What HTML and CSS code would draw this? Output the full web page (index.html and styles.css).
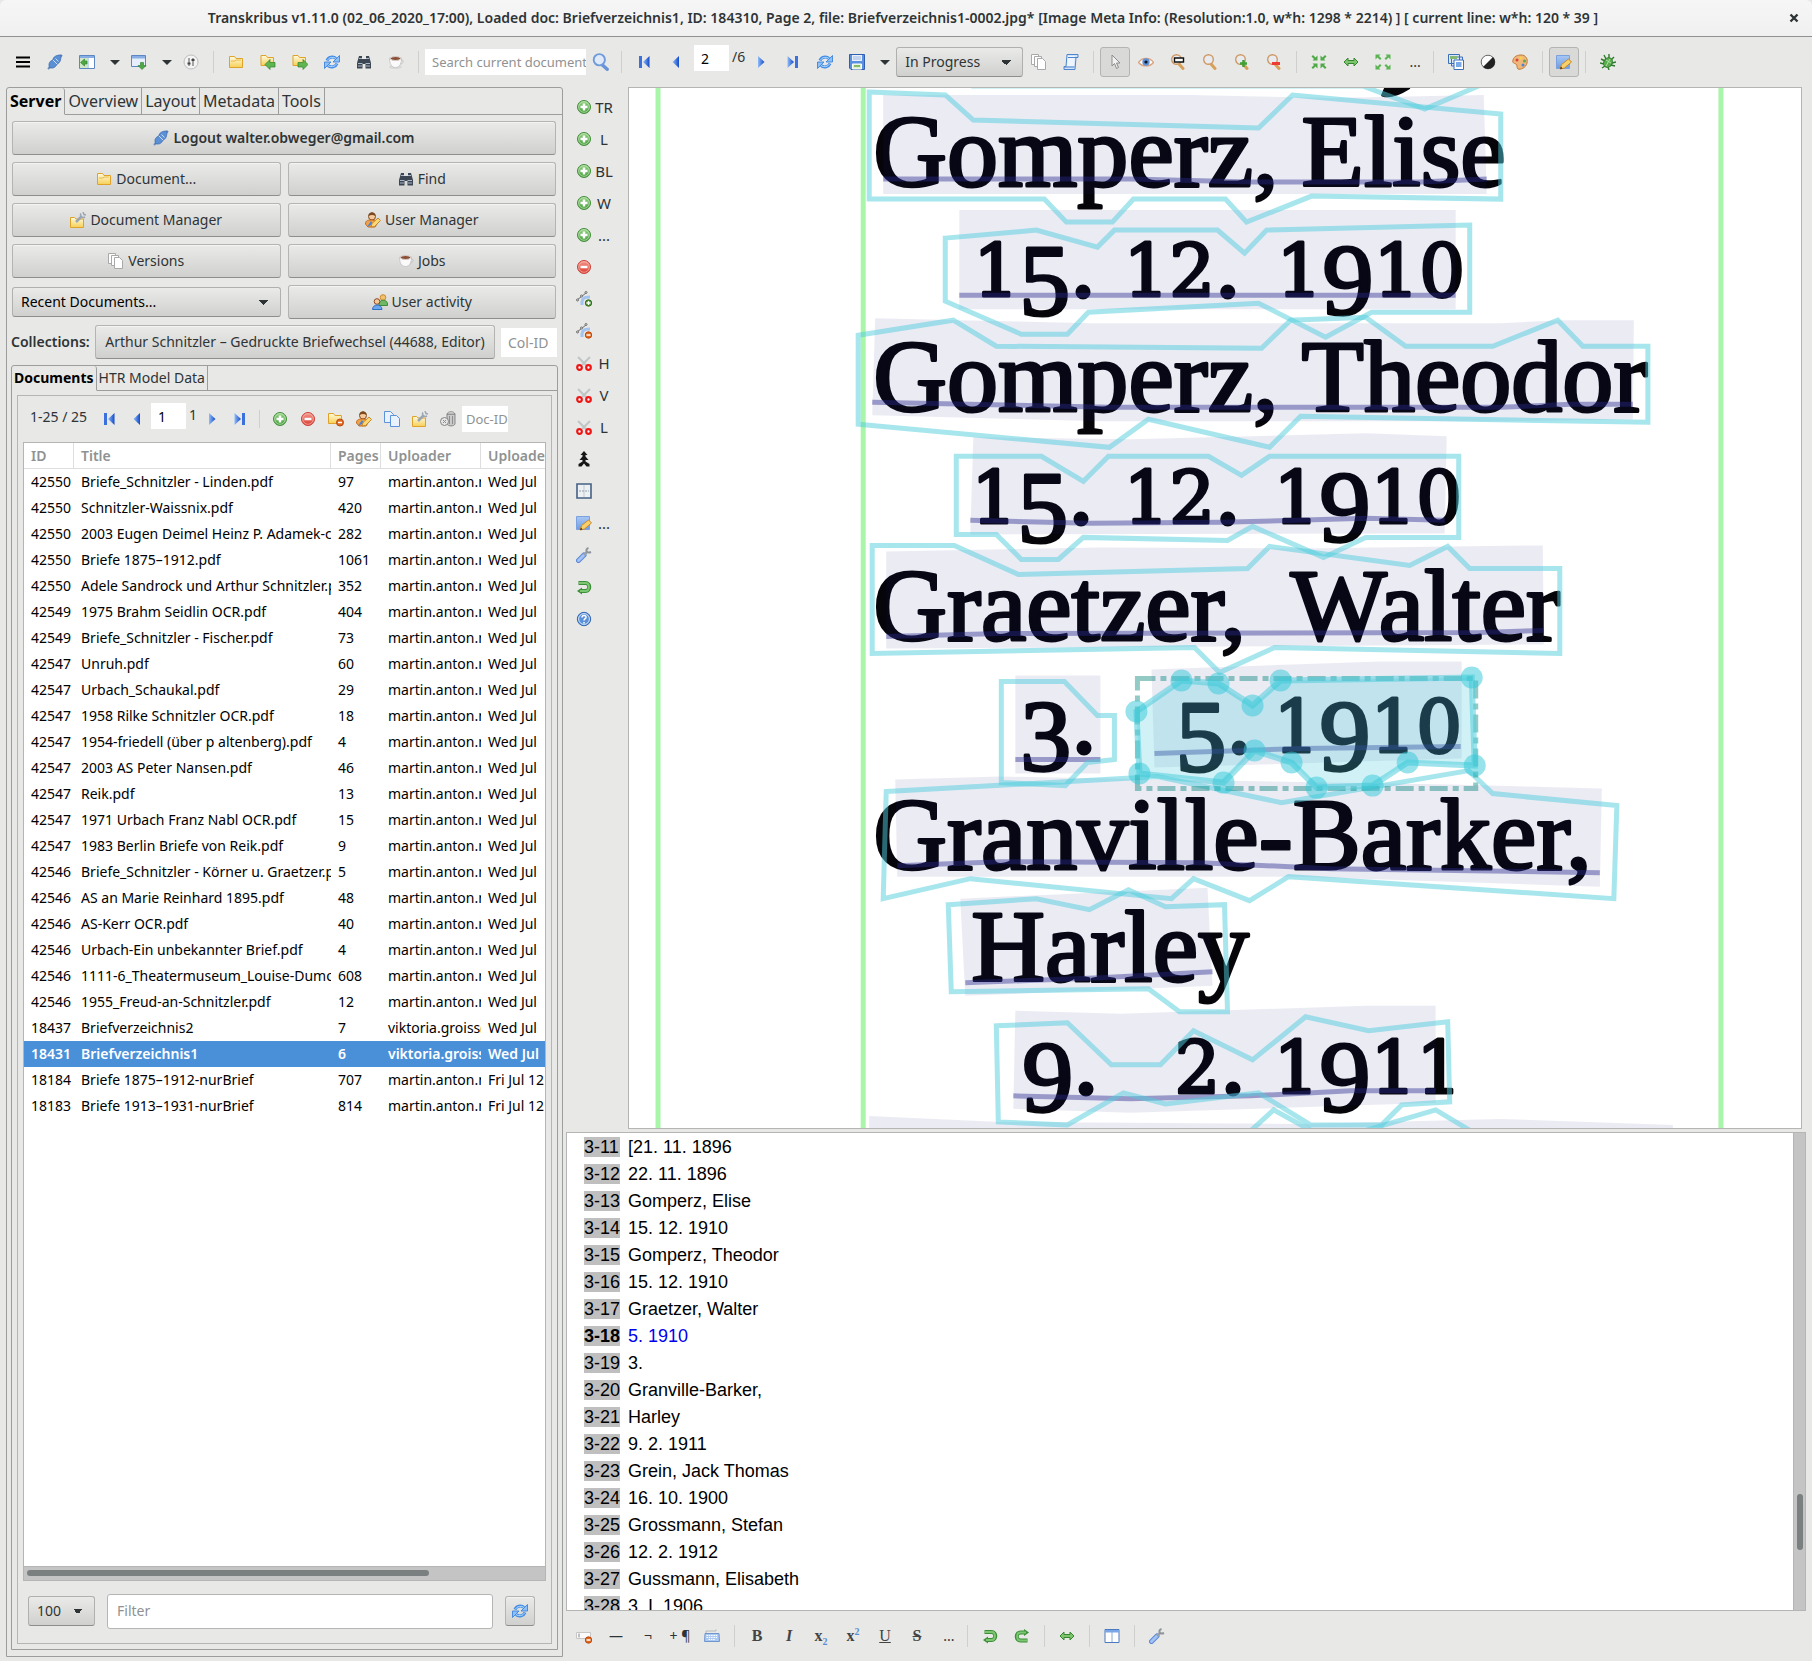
FILE: index.html
```html
<!DOCTYPE html>
<html lang="en">
<head>
<meta charset="utf-8">
<title>Transkribus v1.11.0</title>
<link rel="stylesheet" href="styles.css">
</head>
<body>
<svg class="sprite" aria-hidden="true">
  <defs>
    <linearGradient id="g-green" x2="0" y2="1"><stop offset="0" stop-color="#9bd58c"/><stop offset="1" stop-color="#3f9a36"/></linearGradient>
    <linearGradient id="g-red" x2="0" y2="1"><stop offset="0" stop-color="#f49a8c"/><stop offset="1" stop-color="#d93a30"/></linearGradient>
    <linearGradient id="g-fold" x2="0" y2="1"><stop offset="0" stop-color="#fffbe0"/><stop offset="1" stop-color="#f6cf55"/></linearGradient>
    <linearGradient id="g-blue" x2="1" y2="0"><stop offset="0" stop-color="#8fbcf8"/><stop offset="1" stop-color="#1148c8"/></linearGradient>
    <linearGradient id="g-sky" x2="0" y2="1"><stop offset="0" stop-color="#a8c8f4"/><stop offset="1" stop-color="#6d9ce4"/></linearGradient>
  </defs>
  <symbol id="menu" viewBox="0 0 16 16"><path d="M1 3.5h14M1 8h14M1 12.500h14" stroke="#000" stroke-width="2.200"/></symbol>
  <symbol id="plug" viewBox="0 0 16 16"><path d="M1 15l3-3M12 4l3-3" stroke="#6d8dbd" stroke-width="2"/><path d="M2.500 13.500C1 9 3 7 6 6c0-3 3-5 8-5 0 5-1 8-4 9-1 3-4 5-7.500 3.500z" fill="#5b8fd6" stroke="#3d6cae" stroke-width=".8"/><path d="M6 6l4 4M8.500 4.500l3 3" stroke="#c9ddf6"/></symbol>
  <symbol id="panel-in" viewBox="0 0 16 16"><path d="M.5 1.500h15v13H.5z" fill="#fff" stroke="#5c86c4"/><path d="M1 2h14v2H1z" fill="#88aee6"/><path d="M1 4h7v10H1z" fill="#cfe6c8"/><path d="M9 4v10" stroke="#88aee6"/><path d="M1.500 8.500L5.500 5v2H8v3H5.500v2z" fill="#4ea843" stroke="#2c7d27" stroke-width=".6"/></symbol>
  <symbol id="panel-down" viewBox="0 0 16 16"><path d="M.5 1.500h14v11H.5z" fill="#e6effb" stroke="#5c86c4"/><path d="M1 2h13v2.500H1z" fill="#88aee6"/><path d="M9.500 8.500h3v3h2.500L11 15.500 7 11.500h2.500z" fill="#4ea843" stroke="#2c7d27" stroke-width=".6"/></symbol>
  <symbol id="sliders" viewBox="0 0 16 16"><circle cx="8" cy="8" r="7" fill="#f4f4f4" stroke="#bdbdbd"/><path d="M6 4v8M10 4v8" stroke="#555"/><path d="M4.500 9.500h3M8.500 6h3" stroke="#444" stroke-width="2"/></symbol>
  <symbol id="folder" viewBox="0 0 16 16"><path d="M1.500 13.500v-11h5l1.500 2h6.500v9z" fill="url(#g-fold)" stroke="#dfa22b"/><path d="M3 7h4l1-1h5" fill="none" stroke="#e9b84a"/></symbol>
  <symbol id="folder-in" viewBox="0 0 16 16"><path d="M1 11.500v-10h5l1.500 2h6v8z" fill="url(#g-fold)" stroke="#dfa22b"/><path d="M5 10.500l5-5v3h5v4.500h-5v2.500z" fill="#5fb650" stroke="#2f7f2a" stroke-width=".7"/></symbol>
  <symbol id="folder-out" viewBox="0 0 16 16"><path d="M1 11.500v-10h5l1.500 2h6v8z" fill="url(#g-fold)" stroke="#dfa22b"/><path d="M16 10.500l-5-5v3H6v4.500h5v2.500z" fill="#5fb650" stroke="#2f7f2a" stroke-width=".7"/></symbol>
  <symbol id="refresh" viewBox="0 0 16 16"><path d="M3 6.500A5.500 5 0 0 1 12 4.500M13 9.500A5.500 5 0 0 1 4 11.500" fill="none" stroke="#3f8be6" stroke-width="3"/><path d="M3.500 6A5.500 5 0 0 1 12 4.500M12.500 10A5.500 5 0 0 1 4 11.500" fill="none" stroke="#b8dbff" stroke-width="1"/><path d="M15.500 1.500v6.500H9zM.5 14.500V8H7z" fill="#8cc0fb" stroke="#2f7ad8" stroke-width=".8"/></symbol>
  <symbol id="binoculars" viewBox="0 0 16 16"><path d="M3 2h3v3h4V2h3l2 7v5.500H9.500V10h-3v4.500H1V9z" fill="#3c4652"/><path d="M3 4.500h3M10 4.500h3M2 9.500h4.500M9.500 9.500H14M2 12h4M10 12h4" stroke="#a9b8c8"/></symbol>
  <symbol id="cup" viewBox="0 0 16 16"><ellipse cx="7.500" cy="13" rx="6.500" ry="2" fill="#d8d8d8"/><path d="M1.500 4h12c0 6-2 9.500-6 9.500S1.500 10 1.500 4z" fill="#fafafa" stroke="#c3c3c3" stroke-width=".8"/><path d="M13 6c3-1 3 4-1 4" fill="none" stroke="#c3c3c3"/><ellipse cx="7.500" cy="4.500" rx="5" ry="2" fill="#8b4f35" stroke="#d8d0cc"/></symbol>
  <symbol id="search" viewBox="0 0 16 16"><path d="M9 10.500l4.500 4" stroke="#6794d6" stroke-width="3" stroke-linecap="round"/><circle cx="6.500" cy="6" r="5" fill="#dfe9f7" stroke="#6f9bdc" stroke-width="1.700"/></symbol>
  <symbol id="first" viewBox="0 0 16 16"><path d="M3 2h3v12H3z" fill="#3c70dc"/><path d="M13.500 2v12L7 8z" fill="url(#g-blue)"/></symbol>
  <symbol id="prev" viewBox="0 0 16 16"><path d="M11 2v12L4.500 8z" fill="url(#g-blue)"/></symbol>
  <symbol id="next" viewBox="0 0 16 16"><path d="M5 2v12l6.500-6z" fill="url(#g-blue)"/></symbol>
  <symbol id="last" viewBox="0 0 16 16"><path d="M10 2h3v12h-3z" fill="#3c70dc"/><path d="M2.500 2v12L9 8z" fill="url(#g-blue)"/></symbol>
  <symbol id="save" viewBox="0 0 16 16"><path d="M.5.5h15v15H2l-1.500-1.500z" fill="#5b8fe0" stroke="#2f5fae"/><path d="M3 1h10v6H3z" fill="#e8f0fc"/><path d="M4 3h8M4 5h8" stroke="#9ab6e0"/><path d="M3.500 10h9v5h-9z" fill="#d9f0c8" stroke="#fff"/><path d="M5 12h6" stroke="#69a94e" stroke-width="1.500"/></symbol>
  <symbol id="pages" viewBox="0 0 16 16"><g fill="#fff" stroke="#a9a9a9"><path d="M.5.5h7v10h-7z"/><path d="M3.500 2.500h7v10h-7z"/><path d="M6.500 4.500h5l3 3v8h-8z"/></g></symbol>
  <symbol id="scroll" viewBox="0 0 16 16"><path d="M4 .5h11v3h-2L12 15.500H1v-3h2z" fill="#cfe3fb" stroke="#4f84cc"/><path d="M5 2l-1 10h7l1-10z" fill="#edf5ff"/><path d="M1 13h10.500M5 3.500h8" stroke="#4f84cc"/></symbol>
  <symbol id="pointer" viewBox="0 0 16 16"><path d="M5 1v11l2.500-2.500 2 5 2-1-2-4.500h3.500z" fill="#f2f2f2" stroke="#8c8c8c"/></symbol>
  <symbol id="eye" viewBox="0 0 16 16"><path d="M.5 8.500C4 3 12 3 15.500 8.500 12 13 4 13 .5 8.500z" fill="#fff" stroke="#dca27c" stroke-width="1.300"/><circle cx="8" cy="8" r="3.700" fill="#5d93d6"/><circle cx="8" cy="8" r="1.600" fill="#112"/></symbol>
  <symbol id="mag" viewBox="0 0 16 16"><path d="M9 10l4 4.500" stroke="#d8a15a" stroke-width="3" stroke-linecap="round"/><circle cx="6.500" cy="5.500" r="4.800" fill="#e8ebf0" stroke="#cf9a66" stroke-width="1.400"/></symbol>
  <symbol id="mag-rect" viewBox="0 0 16 16"><use href="#mag"/><path d="M4.500 4h9v4h-9z" fill="#fff" stroke="#111" stroke-width="1.400"/></symbol>
  <symbol id="zoom-in" viewBox="0 0 16 16"><use href="#mag"/><path d="M9.500 6v7M6 9.500h7" stroke="#3f9f38" stroke-width="2.500"/></symbol>
  <symbol id="zoom-out" viewBox="0 0 16 16"><use href="#mag"/><path d="M6 9.500h8" stroke="#ee3b33" stroke-width="3"/></symbol>
  <symbol id="fit-in" viewBox="0 0 16 16"><g fill="#4fa947"><path d="M6.500 6.500H1.500L3 5 .5 2.500 2 1l2.500 2.500 2-2z"/><path d="M9.500 6.500h5L13 5l2.500-2.500L14 1l-2.500 2.500-2-2z"/><path d="M6.500 9.500h-5L3 11 .5 13.500 2 15l2.500-2.500 2 2z"/><path d="M9.500 9.500h5L13 11l2.500 2.500L14 15l-2.500-2.500-2 2z"/></g></symbol>
  <symbol id="fit-out" viewBox="0 0 16 16"><g fill="#5bb452"><path d="M.5.500h5L4 2l2.500 2.500L5 6 2.500 3.500l-2 2z"/><path d="M15.500.500h-5L12 2 9.500 4.500 11 6l2.500-2.500 2 2z"/><path d="M.5 15.500h5L4 14l2.500-2.500L5 10l-2.500 2.500-2-2z"/><path d="M15.500 15.500h-5L12 14l-2.500-2.500L11 10l2.500 2.500 2-2z"/></g></symbol>
  <symbol id="width" viewBox="0 0 16 16"><path d="M1 8l4-4v2.500h6V4l4 4-4 4V9.500H5V12z" fill="#7cc56e" stroke="#35862f"/></symbol>
  <symbol id="images" viewBox="0 0 16 16"><path d="M.5.500h11v9H.5zM3.500 3h11v9h-11z" fill="#dbe8fa" stroke="#3c6fba"/><path d="M2 2h7v3H2z" fill="#86b875"/><path d="M6 6h9.500v9.500H6z" fill="#fff" stroke="#3c6fba"/><path d="M8 8h5.500v5H8z" fill="#7aa9ea"/></symbol>
  <symbol id="contrast" viewBox="0 0 16 16"><circle cx="8" cy="8" r="6.800" fill="#fbfbfb" stroke="#666"/><path d="M13 3a7 7 0 0 1-10 10z" fill="#222"/></symbol>
  <symbol id="palette" viewBox="0 0 16 16"><path d="M9 1c5 0 7 4 6 8-1 5-7 7-9 6-2-2 0-4-2-5s-4-1-3-4c1-4 5-5 8-5z" fill="#f0b77a" stroke="#c07a3a"/><circle cx="5" cy="6" r="1.500" fill="#d9433c"/><circle cx="9" cy="4" r="1.500" fill="#f3d647"/><circle cx="12.500" cy="7" r="1.500" fill="#5aa94f"/><circle cx="11" cy="11" r="1.500" fill="#4a83d6"/></symbol>
  <symbol id="edit" viewBox="0 0 16 16"><path d="M.5 1.500h13v13H.5z" fill="url(#g-sky)" stroke="#7ba2de"/><path d="M4 15l1.500-4.500 7-5.500 3 3-7 6z" fill="#f8d06a" stroke="#c8862c"/><path d="M4 15l1-2.500 1.500 2z" fill="#333"/></symbol>
  <symbol id="bug" viewBox="0 0 16 16"><path d="M4 1l2 4M9 0l0 4M14 3l-3 3M1 5l4 2M16 8l-4 1M0 9l4 1M2 14l3-2M15 12l-4-1M9 16l-1-3" stroke="#2d7a2c" stroke-width="1.400"/><ellipse cx="8" cy="8.500" rx="4.200" ry="5" transform="rotate(30 8 8.500)" fill="#58ad4c" stroke="#2d7a2c"/><path d="M6 6l5 3M6 12l4-7" stroke="#b7e0a8"/></symbol>
  <symbol id="doc-manager" viewBox="0 0 16 16"><path d="M.5 15.500v-10h4l1.500 1.500h7.500v8.500z" fill="url(#g-fold)" stroke="#dfa22b"/><path d="M6 10l5.500-5.500" stroke="#9aa6b4" stroke-width="2.500"/><path d="M11 1.500c-1.500 2 1 5 4 3.500M13 0l1 2.500 2 .500" fill="none" stroke="#9aa6b4" stroke-width="1.500"/></symbol>
  <symbol id="user-edit" viewBox="0 0 16 16"><circle cx="7" cy="4.500" r="3.500" fill="#f6c99a" stroke="#7c4a21"/><path d="M3.500 4c0-5 7-5 7 0-2-1.500-5-1.500-7 0z" fill="#7c4a21"/><path d="M.5 12c0-4 3-4 6.500-4s5 1 5 4l-2 3H3z" fill="#f0a24c" stroke="#c46a1c"/><path d="M2 15l4-6 2 3z" fill="#4a83d6"/><path d="M6 15l1-3.500 6-5.500 2.500 2.500-6 6z" fill="#fbd873" stroke="#c8862c"/></symbol>
  <symbol id="users" viewBox="0 0 16 16"><circle cx="11" cy="3.500" r="2.800" fill="#f3c06a" stroke="#c98a2c"/><path d="M7 10c0-5 8.500-5 8.500 0v1.500H7z" fill="#6fb863" stroke="#3e8a38"/><circle cx="5" cy="7.500" r="2.800" fill="#f6c99a" stroke="#8a4a22"/><path d="M.5 15.500c0-6 9.500-6 9.500 0z" fill="#6ba6ee" stroke="#2f6fc2"/></symbol>
  <symbol id="folder-remove" viewBox="0 0 16 16"><path d="M.5 12.500v-10h5l1.500 2h6.500v8z" fill="url(#g-fold)" stroke="#dfa22b"/><circle cx="12" cy="11.500" r="3.500" fill="#e06a20" stroke="#b8480f"/><path d="M10 11.500h4" stroke="#fff" stroke-width="1.500"/></symbol>
  <symbol id="copy" viewBox="0 0 16 16"><g fill="#e9f2fe" stroke="#5c92dc"><path d="M.5.500h6l3 3v8h-9z"/><path d="M6.500 4.500h6l3 3v8h-9z"/></g></symbol>
  <symbol id="bin" viewBox="0 0 16 16"><path d="M7 3h8v10c-1 2.500-7 2.500-8 0z" fill="#c9c9c9" stroke="#858585"/><path d="M9.500 5v8M12.500 5v8" stroke="#8e8e8e"/><path d="M7 3c1-3 7-3 8 0z" fill="#eee" stroke="#858585"/><circle cx="4.500" cy="10.500" r="4" fill="#e6e6e6" stroke="#858585"/><path d="M3 9l3 3M6 9l-3 3" stroke="#8c8c8c"/></symbol>
  <symbol id="add" viewBox="0 0 16 16"><circle cx="8" cy="8" r="6.500" fill="url(#g-green)" stroke="#438f3b"/><circle cx="8" cy="8" r="5.300" fill="none" stroke="#c9eabf" stroke-width=".7"/><path d="M8 4.500v7M4.500 8h7" stroke="#fff" stroke-width="2.500"/></symbol>
  <symbol id="remove" viewBox="0 0 16 16"><circle cx="8" cy="8" r="6.500" fill="url(#g-red)" stroke="#cb4038"/><circle cx="8" cy="8" r="5.300" fill="none" stroke="#f8bdb5" stroke-width=".7"/><path d="M4.500 8h7" stroke="#fff" stroke-width="2.500"/></symbol>
  <symbol id="curve" viewBox="0 0 16 16"><path d="M6 14c-.5-6 1-8 8-8" fill="none" stroke="#a3c3f0" stroke-width="3"/><path d="M1 9l9-7" stroke="#666"/><g fill="#fff" stroke="#666"><circle cx="1.500" cy="9" r="1"/><circle cx="5.500" cy="5" r="1"/><circle cx="10" cy="1.500" r="1"/></g></symbol>
  <symbol id="point-add" viewBox="0 0 16 16"><use href="#curve"/><circle cx="12.500" cy="12" r="3.200" fill="#55943a" stroke="#2f6e1c"/><path d="M12.500 10v4M10.500 12h4" stroke="#fff" stroke-width="1.300"/></symbol>
  <symbol id="point-remove" viewBox="0 0 16 16"><use href="#curve"/><circle cx="12.500" cy="12" r="3.200" fill="#e06a20" stroke="#b8480f"/><path d="M10.500 12h4" stroke="#fff" stroke-width="1.500"/></symbol>
  <symbol id="scissors" viewBox="0 0 16 16"><path d="M2 2l8 8M14 2L6 10" stroke="#bfc4c4" stroke-width="2"/><g fill="#fff" stroke="#ee1515" stroke-width="2.200"><circle cx="3.500" cy="12.500" r="2.300"/><circle cx="12.500" cy="12.500" r="2.300"/></g></symbol>
  <symbol id="merge" viewBox="0 0 16 16"><path d="M8 0l3.500 4H9.500v1.500l3 3.500H9.500v1.500l4 2.500v2.500h-3L8 12.500 5.500 15.500h-3V13l4-2.500V9h-3l3-3.500V4h-2z" fill="#161616"/></symbol>
  <symbol id="grid" viewBox="0 0 16 16"><path d="M1 1h14v14H1z" fill="#eef1f4" stroke="#456084" stroke-width="1.600"/><path d="M8 2v12" stroke="#c3c9d0"/><path d="M3 8h10" stroke="#93a0b0" stroke-dasharray="2 1"/></symbol>
  <symbol id="wrench" viewBox="0 0 16 16"><path d="M2.500 13.500L8 8" stroke="#5b86d6" stroke-width="5" stroke-linecap="round"/><path d="M2.500 13.500L8 8" stroke="#a3c3f4" stroke-width="3" stroke-linecap="round"/><path d="M8 8l3-3" stroke="#9aa1a8" stroke-width="2.500"/><path d="M12.500 1C9 2 10 7 15 5" fill="none" stroke="#8d949b" stroke-width="2"/></symbol>
  <symbol id="undo" viewBox="0 0 16 16"><path d="M2.500 4h7c5 0 5 8 0 8H5" fill="none" stroke="#3c8f38" stroke-width="4"/><path d="M6 8.500v7L1 12z" fill="#3c8f38"/><path d="M3 4h6.500c4.500 0 4.500 8 0 8H4" fill="none" stroke="#7cc672" stroke-width="2"/></symbol>
  <symbol id="redo" viewBox="0 0 16 16"><path d="M13.500 12.500h-7c-5 0-5-8 0-8H11" fill="none" stroke="#3c8f38" stroke-width="4"/><path d="M10 1v7l5-3.500z" fill="#3c8f38"/><path d="M13 12.500H6.500c-4.500 0-4.500-8 0-8H12" fill="none" stroke="#7cc672" stroke-width="2"/></symbol>
  <symbol id="help" viewBox="0 0 16 16"><circle cx="8" cy="8" r="6.700" fill="#5b91d8" stroke="#3468b0"/><circle cx="8" cy="8" r="5.400" fill="none" stroke="#d4e4f8"/><path d="M6 6.500c0-3 4.500-2.500 4 0-.3 1.200-2 1.200-2 3M8 11v1.500" fill="none" stroke="#fff" stroke-width="1.500"/></symbol>
  <symbol id="field-remove" viewBox="0 0 16 16"><path d="M.5 4.500h14v6H.5z" fill="#fbfbfb" stroke="#c6c6c6"/><path d="M3 5.500v4" stroke="#888"/><circle cx="12.500" cy="12" r="3.200" fill="#e06a20" stroke="#b8480f"/><path d="M10.500 12h4" stroke="#fff" stroke-width="1.500"/></symbol>
  <symbol id="keyboard" viewBox="0 0 16 16"><path d="M2 5V3h10V1.500" fill="none" stroke="#b4b8bc"/><path d="M1 5.500h14l.5 8H.5z" fill="#a9c8f2" stroke="#7096cc"/><path d="M2.500 7.500h11M2.500 9.500h11M4.500 11.500h7" stroke="#fff" stroke-dasharray="1.500 .8"/></symbol>
  <symbol id="columns" viewBox="0 0 16 16"><path d="M1 1.500h14v13H1z" fill="#fff" stroke="#4a79c0"/><path d="M1 2h14v2.500H1z" fill="#7ba7e6"/><path d="M8 4v10" stroke="#88a9d6"/></symbol>
</svg>

<div class="window">
  <header class="titlebar">
    <h1 class="title">Transkribus v1.11.0 (02_06_2020_17:00), Loaded doc: Briefverzeichnis1, ID: 184310, Page 2, file: Briefverzeichnis1-0002.jpg* [Image Meta Info: (Resolution:1.0, w*h: 1298 * 2214) ] [ current line: w*h: 120 * 39 ]</h1>
    <button class="close" aria-label="Close"><svg viewBox="0 0 10 10"><path d="M1.500 1.500l7 7M8.500 1.500l-7 7" stroke="#2e3436" stroke-width="2.400"/></svg></button>
  </header>

  <nav class="toolbar" aria-label="Main">
    <button class="tool" aria-label="Menu"><svg class="icon"><use href="#menu"/></svg></button>
    <button class="tool" aria-label="Log out"><svg class="icon"><use href="#plug"/></svg></button>
    <button class="tool" aria-label="Dock panel"><svg class="icon"><use href="#panel-in"/></svg></button>
    <button class="tool arrow" aria-label="Dock options"></button>
    <button class="tool" aria-label="Bottom panel"><svg class="icon"><use href="#panel-down"/></svg></button>
    <button class="tool arrow" aria-label="Panel options"></button>
    <button class="tool" aria-label="Profiles"><svg class="icon"><use href="#sliders"/></svg></button>
    <span class="sep"></span>
    <button class="tool" aria-label="Open"><svg class="icon"><use href="#folder"/></svg></button>
    <button class="tool" aria-label="Import"><svg class="icon"><use href="#folder-in"/></svg></button>
    <button class="tool" aria-label="Export"><svg class="icon"><use href="#folder-out"/></svg></button>
    <button class="tool" aria-label="Sync"><svg class="icon"><use href="#refresh"/></svg></button>
    <button class="tool" aria-label="Find"><svg class="icon"><use href="#binoculars"/></svg></button>
    <button class="tool" aria-label="Jobs"><svg class="icon"><use href="#cup"/></svg></button>
    <span class="sep"></span>
    <input class="flat search" type="text" aria-label="Search" placeholder="Search current document...">
    <button class="tool" aria-label="Search"><svg class="icon big"><use href="#search"/></svg></button>
    <span class="sep"></span>
    <button class="tool" aria-label="First page"><svg class="icon"><use href="#first"/></svg></button>
    <button class="tool" aria-label="Previous page"><svg class="icon"><use href="#prev"/></svg></button>
    <span class="pageno"><input class="flat num" type="text" aria-label="Page" value="2"><span class="of">/6</span></span>
    <button class="tool" aria-label="Next page"><svg class="icon"><use href="#next"/></svg></button>
    <button class="tool" aria-label="Last page"><svg class="icon"><use href="#last"/></svg></button>
    <button class="tool" aria-label="Reload"><svg class="icon"><use href="#refresh"/></svg></button>
    <button class="tool" aria-label="Save"><svg class="icon"><use href="#save"/></svg></button>
    <button class="tool arrow" aria-label="Save options"></button>
    <select class="combo status" aria-label="Status"><option>In Progress</option></select>
    <button class="tool" aria-label="Versions"><svg class="icon"><use href="#pages"/></svg></button>
    <button class="tool" aria-label="Log"><svg class="icon"><use href="#scroll"/></svg></button>
    <span class="sep"></span>
    <button class="tool pressed" aria-label="Select"><svg class="icon"><use href="#pointer"/></svg></button>
    <button class="tool" aria-label="Visibility"><svg class="icon"><use href="#eye"/></svg></button>
    <button class="tool" aria-label="Zoom to selection"><svg class="icon"><use href="#mag-rect"/></svg></button>
    <button class="tool" aria-label="Zoom"><svg class="icon"><use href="#mag"/></svg></button>
    <button class="tool" aria-label="Zoom in"><svg class="icon"><use href="#zoom-in"/></svg></button>
    <button class="tool" aria-label="Zoom out"><svg class="icon"><use href="#zoom-out"/></svg></button>
    <span class="sep"></span>
    <button class="tool" aria-label="Fit page"><svg class="icon"><use href="#fit-in"/></svg></button>
    <button class="tool" aria-label="Fit width"><svg class="icon"><use href="#width"/></svg></button>
    <button class="tool" aria-label="Original size"><svg class="icon"><use href="#fit-out"/></svg></button>
    <button class="tool dots">...</button>
    <span class="sep"></span>
    <button class="tool" aria-label="Images"><svg class="icon"><use href="#images"/></svg></button>
    <button class="tool" aria-label="Contrast"><svg class="icon"><use href="#contrast"/></svg></button>
    <button class="tool" aria-label="Colors"><svg class="icon"><use href="#palette"/></svg></button>
    <span class="sep"></span>
    <button class="tool pressed" aria-label="Edit"><svg class="icon"><use href="#edit"/></svg></button>
    <span class="sep"></span>
    <button class="tool" aria-label="Report a bug"><svg class="icon"><use href="#bug"/></svg></button>
  </nav>

  <main class="main">
    <aside class="sidebar">
      <div class="tabs">
        <button class="tab active">Server</button><button class="tab">Overview</button><button class="tab">Layout</button><button class="tab">Metadata</button><button class="tab">Tools</button><span class="tabfill"></span>
      </div>
      <div class="server">
        <button class="btn wide"><svg class="icon"><use href="#plug"/></svg>Logout walter.obweger@gmail.com</button>
        <button class="btn"><svg class="icon"><use href="#folder"/></svg>Document...</button>
        <button class="btn"><svg class="icon"><use href="#binoculars"/></svg>Find</button>
        <button class="btn"><svg class="icon"><use href="#doc-manager"/></svg>Document Manager</button>
        <button class="btn"><svg class="icon"><use href="#user-edit"/></svg>User Manager</button>
        <button class="btn"><svg class="icon"><use href="#pages"/></svg>Versions</button>
        <button class="btn"><svg class="icon"><use href="#cup"/></svg>Jobs</button>
        <select class="combo recent" aria-label="Recent documents"><option>Recent Documents...</option></select>
        <button class="btn"><svg class="icon"><use href="#users"/></svg>User activity</button>
      </div>
      <div class="collections">
        <label class="coll-label" for="coll">Collections:</label>
        <button class="btn coll" id="coll">Arthur Schnitzler – Gedruckte Briefwechsel (44688, Editor)</button>
        <input class="flat colid" type="text" aria-label="Collection ID" placeholder="Col-ID">
      </div>
      <section class="docs">
        <div class="tabs small">
          <button class="tab active">Documents</button><button class="tab">HTR Model Data</button><span class="tabfill"></span>
        </div>
        <div class="docframe">
          <div class="pager">
            <span class="range">1-25 / 25</span>
            <button class="tool" aria-label="First"><svg class="icon"><use href="#first"/></svg></button>
            <button class="tool" aria-label="Previous"><svg class="icon"><use href="#prev"/></svg></button>
            <span class="pageno"><input class="flat num" type="text" aria-label="List page" value="1"><span class="of">1</span></span>
            <button class="tool" aria-label="Next"><svg class="icon"><use href="#next"/></svg></button>
            <button class="tool" aria-label="Last"><svg class="icon"><use href="#last"/></svg></button>
            <span class="sep"></span>
            <button class="tool" aria-label="Add"><svg class="icon"><use href="#add"/></svg></button>
            <button class="tool" aria-label="Remove"><svg class="icon"><use href="#remove"/></svg></button>
            <button class="tool" aria-label="Delete document"><svg class="icon"><use href="#folder-remove"/></svg></button>
            <button class="tool" aria-label="Manage users"><svg class="icon"><use href="#user-edit"/></svg></button>
            <button class="tool" aria-label="Duplicate"><svg class="icon"><use href="#copy"/></svg></button>
            <button class="tool" aria-label="Manage"><svg class="icon"><use href="#doc-manager"/></svg></button>
            <button class="tool" aria-label="Recycle bin"><svg class="icon"><use href="#bin"/></svg></button>
            <input class="flat docid" type="text" aria-label="Document ID" placeholder="Doc-ID">
          </div>
          <div class="tablebox">
            <table class="table">
              <colgroup><col class="c-id"><col class="c-title"><col class="c-pages"><col class="c-up"><col></colgroup>
              <thead><tr><th>ID</th><th>Title</th><th>Pages</th><th>Uploader</th><th>Uploaded</th></tr></thead>
              <tbody>
                <tr><td>42550</td><td>Briefe_Schnitzler - Linden.pdf</td><td>97</td><td>martin.anton.m</td><td>Wed Jul</td></tr>
                <tr><td>42550</td><td>Schnitzler-Waissnix.pdf</td><td>420</td><td>martin.anton.m</td><td>Wed Jul</td></tr>
                <tr><td>42550</td><td>2003 Eugen Deimel Heinz P. Adamek-c</td><td>282</td><td>martin.anton.m</td><td>Wed Jul</td></tr>
                <tr><td>42550</td><td>Briefe 1875–1912.pdf</td><td>1061</td><td>martin.anton.m</td><td>Wed Jul</td></tr>
                <tr><td>42550</td><td>Adele Sandrock und Arthur Schnitzler.p</td><td>352</td><td>martin.anton.m</td><td>Wed Jul</td></tr>
                <tr><td>42549</td><td>1975 Brahm Seidlin OCR.pdf</td><td>404</td><td>martin.anton.m</td><td>Wed Jul</td></tr>
                <tr><td>42549</td><td>Briefe_Schnitzler - Fischer.pdf</td><td>73</td><td>martin.anton.m</td><td>Wed Jul</td></tr>
                <tr><td>42547</td><td>Unruh.pdf</td><td>60</td><td>martin.anton.m</td><td>Wed Jul</td></tr>
                <tr><td>42547</td><td>Urbach_Schaukal.pdf</td><td>29</td><td>martin.anton.m</td><td>Wed Jul</td></tr>
                <tr><td>42547</td><td>1958 Rilke Schnitzler OCR.pdf</td><td>18</td><td>martin.anton.m</td><td>Wed Jul</td></tr>
                <tr><td>42547</td><td>1954-friedell (über p altenberg).pdf</td><td>4</td><td>martin.anton.m</td><td>Wed Jul</td></tr>
                <tr><td>42547</td><td>2003 AS Peter Nansen.pdf</td><td>46</td><td>martin.anton.m</td><td>Wed Jul</td></tr>
                <tr><td>42547</td><td>Reik.pdf</td><td>13</td><td>martin.anton.m</td><td>Wed Jul</td></tr>
                <tr><td>42547</td><td>1971 Urbach Franz Nabl OCR.pdf</td><td>15</td><td>martin.anton.m</td><td>Wed Jul</td></tr>
                <tr><td>42547</td><td>1983 Berlin Briefe von Reik.pdf</td><td>9</td><td>martin.anton.m</td><td>Wed Jul</td></tr>
                <tr><td>42546</td><td>Briefe_Schnitzler - Körner u. Graetzer.p</td><td>5</td><td>martin.anton.m</td><td>Wed Jul</td></tr>
                <tr><td>42546</td><td>AS an Marie Reinhard 1895.pdf</td><td>48</td><td>martin.anton.m</td><td>Wed Jul</td></tr>
                <tr><td>42546</td><td>AS-Kerr OCR.pdf</td><td>40</td><td>martin.anton.m</td><td>Wed Jul</td></tr>
                <tr><td>42546</td><td>Urbach-Ein unbekannter Brief.pdf</td><td>4</td><td>martin.anton.m</td><td>Wed Jul</td></tr>
                <tr><td>42546</td><td>1111-6_Theatermuseum_Louise-Dumo</td><td>608</td><td>martin.anton.m</td><td>Wed Jul</td></tr>
                <tr><td>42546</td><td>1955_Freud-an-Schnitzler.pdf</td><td>12</td><td>martin.anton.m</td><td>Wed Jul</td></tr>
                <tr><td>18437</td><td>Briefverzeichnis2</td><td>7</td><td>viktoria.groiss(</td><td>Wed Jul</td></tr>
                <tr class="selected"><td>18431</td><td>Briefverzeichnis1</td><td>6</td><td>viktoria.groiss</td><td>Wed Jul</td></tr>
                <tr><td>18184</td><td>Briefe 1875–1912-nurBrief</td><td>707</td><td>martin.anton.m</td><td>Fri Jul 12</td></tr>
                <tr><td>18183</td><td>Briefe 1913–1931-nurBrief</td><td>814</td><td>martin.anton.m</td><td>Fri Jul 12</td></tr>
              </tbody>
            </table>
            <div class="hscroll"><div class="hthumb"></div></div>
          </div>
          <div class="filterbar">
            <select class="combo count" aria-label="Rows per page"><option>100</option></select>
            <input class="filter" type="text" aria-label="Filter" placeholder="Filter">
            <button class="btn reload" aria-label="Reload list"><svg class="icon"><use href="#refresh"/></svg></button>
          </div>
        </div>
      </section>
    </aside>

    <div class="work">
      <div class="upper">
        <nav class="sidetools" aria-label="Segmentation">
          <button class="side"><svg class="icon"><use href="#add"/></svg><span>TR</span></button>
          <button class="side"><svg class="icon"><use href="#add"/></svg><span>L</span></button>
          <button class="side"><svg class="icon"><use href="#add"/></svg><span>BL</span></button>
          <button class="side"><svg class="icon"><use href="#add"/></svg><span>W</span></button>
          <button class="side"><svg class="icon"><use href="#add"/></svg><span>...</span></button>
          <button class="side" aria-label="Remove shape"><svg class="icon"><use href="#remove"/></svg></button>
          <button class="side" aria-label="Add point"><svg class="icon"><use href="#point-add"/></svg></button>
          <button class="side" aria-label="Remove point"><svg class="icon"><use href="#point-remove"/></svg></button>
          <button class="side"><svg class="icon"><use href="#scissors"/></svg><span>H</span></button>
          <button class="side"><svg class="icon"><use href="#scissors"/></svg><span>V</span></button>
          <button class="side"><svg class="icon"><use href="#scissors"/></svg><span>L</span></button>
          <button class="side" aria-label="Merge"><svg class="icon"><use href="#merge"/></svg></button>
          <button class="side" aria-label="Table"><svg class="icon"><use href="#grid"/></svg></button>
          <button class="side"><svg class="icon"><use href="#edit"/></svg><span>...</span></button>
          <button class="side" aria-label="Settings"><svg class="icon"><use href="#wrench"/></svg></button>
          <button class="side" aria-label="Undo"><svg class="icon"><use href="#undo"/></svg></button>
          <button class="side" aria-label="Help"><svg class="icon"><use href="#help"/></svg></button>
        </nav>
        <div class="canvas">
          <svg class="page" viewBox="629 88 1171 1041" preserveAspectRatio="xMinYMin slice">
            <!-- scanned text; old-style figures: x-height 0 1 2, descending 3 5 9 -->
            <g class="scan">
              <path d="M1382 95c8 3 18-2 26-7l-22-2z"/>
              <text x="873" y="186">Gomperz,</text><text x="1301" y="186">Elise</text>
              <text x="973" y="297"><tspan class="fig">1</tspan><tspan dy="18">5</tspan><tspan dy="-18">.</tspan></text>
              <text x="1123" y="297"><tspan class="fig">12</tspan>.</text>
              <text x="1276" y="297"><tspan class="fig">1</tspan><tspan dy="18">9</tspan><tspan class="fig" dy="-18">10</tspan></text>
              <text x="873" y="411">Gomperz,</text><text x="1301" y="411">Theodor</text>
              <text x="971" y="524"><tspan class="fig">1</tspan><tspan dy="18">5</tspan><tspan dy="-18">.</tspan></text>
              <text x="1123" y="524"><tspan class="fig">12</tspan>.</text>
              <text x="1273" y="524"><tspan class="fig">1</tspan><tspan dy="18">9</tspan><tspan class="fig" dy="-18">10</tspan></text>
              <text x="873" y="640">Graetzer,</text><text x="1290" y="640">Walter</text>
              <text x="1020" y="770">3<tspan dy="-18">.</tspan></text>
              <text x="1175" y="770">5<tspan dy="-18">.</tspan></text>
              <text x="1273" y="752"><tspan class="fig">1</tspan><tspan dy="18">9</tspan><tspan class="fig" dy="-18">10</tspan></text>
              <text x="873" y="868">Granville-Barker,</text>
              <text x="971" y="980">Harley</text>
              <text x="1022" y="1111">9<tspan dy="-18">.</tspan></text>
              <text x="1174" y="1093"><tspan class="fig">2</tspan>.</text>
              <text x="1273" y="1093"><tspan class="fig">1</tspan><tspan dy="18">9</tspan><tspan class="fig" dy="-18">11</tspan></text>
            </g>
            <g class="region"><path d="M658 80V1140M863 80V1140M1720 80V1140"/></g>
            <g class="band">
              <path d="M883 95H1190L1330 98 1483 95 1486 194H883z"/>
              <path d="M959 210h496v99H959z"/>
              <path d="M875 318L960 320 1090 323H1500L1560 320H1633L1632 419 1500 421H1100L872 415z"/>
              <path d="M973 437L1130 439 1365 433 1446 436 1444 533 970 534z"/>
              <path d="M886 551L1100 547 1300 548 1542 545 1543 644 886 648z"/>
              <path d="M1015 675h85v98h-85z"/>
              <path d="M1151 669L1380 661H1461V758L1154 767z"/>
              <path d="M895 779L1000 776 1450 784 1601 788 1599 886 1300 876H897z"/>
              <path d="M960 898L1207 887 1212 985 965 995z"/>
              <path d="M1015 1010L1120 1013 1365 1005H1435V1102L1130 1112 1013 1108z"/>
              <path d="M869 1115L1000 1121 1300 1123 1500 1118 1672 1124V1140H869z"/>
            </g>
            <g class="baseline">
              <path d="M883 179H1130L1250 182H1420L1486 179"/>
              <path d="M959 295H1455"/>
              <path d="M872 402L1110 407H1500L1570 404H1632"/>
              <path d="M970 520L1090 523 1220 522 1365 518 1444 520"/>
              <path d="M886 636L1000 633 1480 632 1543 630"/>
              <path d="M1015 759H1100"/>
              <path d="M1154 753L1300 748 1460 746"/>
              <path d="M897 865L1000 861 1200 862 1330 868 1599 872"/>
              <path d="M965 982L1100 977 1212 971"/>
              <path d="M1013 1095L1130 1098 1250 1095 1350 1090H1435"/>
            </g>
            <g class="line">
              <path d="M971 86L1362 86 1424 109 1480 85"/>
              <path d="M869 92L945 95 973 120 1258 128 1292 95 1500 114V199L1311 196 1246 222 1225 199H1133L1112 222H1066L1044 199H869z"/>
              <path d="M945 238L1036 230 1097 247 1114 230H1217L1244 253 1266 230 1469 225V312H1371L1325 337 1258 303 1088 312 1067 334H1021L945 301z"/>
              <path d="M858 335L953 320 996 346 1261 348 1290 320 1365 317 1405 346H1492L1557 320 1582 346H1647V422L1300 416 1269 447 1148 419 1109 447 858 424z"/>
              <path d="M956 456H1041L1083 481 1108 456H1208L1241 475 1269 456H1458V537H1365L1323 557 1252 526 1227 540 1083 537 1058 559H1021L996 534H956z"/>
              <path d="M872 545H954L1018 574 1247 568 1269 546 1409 565 1447 546 1469 568H1559V653L1274 647 1219 672 1194 647 872 653z"/>
              <path d="M1001 681H1064L1097 715H1114V759L1087 762 1065 785 1001 782z"/>
              <path d="M886 791L1157 776 1281 802 1468 770 1492 793 1616 805 1613 898 1288 876 1249 900 1193 878 1171 898 970 878 883 898z"/>
              <path d="M948 904L1036 898 1089 909 1128 889 1165 906 1224 904 1227 1011H1179L1148 988 951 991z"/>
              <path d="M996 1025L1067 1022 1111 1064H1160L1193 1030 1252 1059 1305 1016 1368 1030 1447 1021 1449 1101 1401 1104 1381 1124H1310L1258 1092 1165 1103 1123 1092 1067 1124 998 1121z"/>
              <path d="M1249 1131L1273 1109 1313 1131M1360 1131L1435 1109 1475 1133"/>
            </g>
            <g class="current">
              <rect class="bounds" x="1137" y="678" width="338" height="110"/>
              <path class="shape" d="M1136 711L1181 680 1218 683 1252 705 1280 680 1471 677 1474 765 1407 762 1372 785 1316 787 1291 762 1254 750 1223 782 1139 773z"/>
              <g class="knots"><circle cx="1136" cy="711" r="11"/><circle cx="1181" cy="680" r="11"/><circle cx="1218" cy="683" r="11"/><circle cx="1252" cy="705" r="11"/><circle cx="1280" cy="680" r="11"/><circle cx="1471" cy="677" r="11"/><circle cx="1474" cy="765" r="11"/><circle cx="1407" cy="762" r="11"/><circle cx="1372" cy="785" r="11"/><circle cx="1316" cy="787" r="11"/><circle cx="1291" cy="762" r="11"/><circle cx="1254" cy="750" r="11"/><circle cx="1223" cy="782" r="11"/><circle cx="1139" cy="773" r="11"/></g>
            </g>
          </svg>
        </div>
      </div>

      <section class="transcript">
        <div class="lines">
          <p class="tl"><span class="no">3-11</span>[21. 11. 1896</p>
          <p class="tl"><span class="no">3-12</span>22. 11. 1896</p>
          <p class="tl"><span class="no">3-13</span>Gomperz, Elise</p>
          <p class="tl"><span class="no">3-14</span>15. 12. 1910</p>
          <p class="tl"><span class="no">3-15</span>Gomperz, Theodor</p>
          <p class="tl"><span class="no">3-16</span>15. 12. 1910</p>
          <p class="tl"><span class="no">3-17</span>Graetzer, Walter</p>
          <p class="tl now"><span class="no">3-18</span>5. 1910</p>
          <p class="tl"><span class="no">3-19</span>3.</p>
          <p class="tl"><span class="no">3-20</span>Granville-Barker,</p>
          <p class="tl"><span class="no">3-21</span>Harley</p>
          <p class="tl"><span class="no">3-22</span>9. 2. 1911</p>
          <p class="tl"><span class="no">3-23</span>Grein, Jack Thomas</p>
          <p class="tl"><span class="no">3-24</span>16. 10. 1900</p>
          <p class="tl"><span class="no">3-25</span>Grossmann, Stefan</p>
          <p class="tl"><span class="no">3-26</span>12. 2. 1912</p>
          <p class="tl"><span class="no">3-27</span>Gussmann, Elisabeth</p>
          <p class="tl"><span class="no">3-28</span>3. I. 1906</p>
        </div>
        <div class="vscroll"><div class="vspace"></div><div class="vthumb"></div></div>
      </section>

      <nav class="texttools" aria-label="Text">
        <button class="tool" aria-label="Delete text"><svg class="icon"><use href="#field-remove"/></svg></button>
        <button class="tool">—</button>
        <button class="tool">¬</button>
        <button class="tool">+ ¶</button>
        <button class="tool" aria-label="Virtual keyboard"><svg class="icon"><use href="#keyboard"/></svg></button>
        <span class="sep"></span>
        <button class="tool glyph"><b>B</b></button>
        <button class="tool glyph"><b><i>I</i></b></button>
        <button class="tool glyph script"><b>x<sub>2</sub></b></button>
        <button class="tool glyph script"><b>x<sup>2</sup></b></button>
        <button class="tool glyph"><u>U</u></button>
        <button class="tool glyph"><b><s>S</s></b></button>
        <button class="tool dots">...</button>
        <span class="sep"></span>
        <button class="tool" aria-label="Undo edit"><svg class="icon"><use href="#undo"/></svg></button>
        <button class="tool" aria-label="Redo edit"><svg class="icon"><use href="#redo"/></svg></button>
        <span class="sep"></span>
        <button class="tool" aria-label="Width"><svg class="icon"><use href="#width"/></svg></button>
        <span class="sep"></span>
        <button class="tool" aria-label="Columns"><svg class="icon"><use href="#columns"/></svg></button>
        <span class="sep"></span>
        <button class="tool" aria-label="Text settings"><svg class="icon"><use href="#wrench"/></svg></button>
      </nav>
    </div>
  </main>
</div>
</body>
</html>
```
FILE: styles.css
```css
* { box-sizing: border-box; }
body { margin: 0; background: #e8e8e6; color: #2e3436; font: 14px/20px "Noto Sans", "Open Sans", sans-serif; }
button, input, select { font: inherit; color: inherit; margin: 0; padding: 0; border: 0; background: none; border-radius: 0; }
input { min-width: 0; }
::placeholder { color: #8f9292; opacity: 1; }
.sprite { position: absolute; width: 0; height: 0; }
.icon { width: 16px; height: 16px; flex: none; display: block; }
.icon.big { width: 18px; height: 18px; }

.window { height: 100vh; display: flex; flex-direction: column; }
.titlebar { height: 37px; flex: none; display: flex; align-items: center; background: linear-gradient(#f6f6f6, #f0f0f0); border-bottom: 1px solid #8f9291; border-radius: 6px 6px 0 0; }
.title { flex: 1; margin: 0; padding-left: 30px; text-align: center; font-size: 14px; font-weight: 600; white-space: nowrap; }
.close { width: 36px; height: 36px; display: flex; align-items: center; justify-content: center; }
.close svg { width: 10px; height: 10px; }

.toolbar { height: 50px; flex: none; display: flex; align-items: center; padding-left: 7px; }
.tool { width: 32px; height: 30px; flex: none; display: flex; align-items: center; justify-content: center; white-space: nowrap; }
.tool.arrow { width: 20px; padding-left: 4px; }
.tool.arrow::after { content: ""; border: 5px solid transparent; border-top-color: #2e3436; border-bottom: 0; }
.tool.pressed { width: 30px; border: 1px solid #b4b4b2; border-radius: 3px; background: #d9d9d7; }
.tool.dots { width: 28px; padding-left: 4px; }
.sep { width: 1px; height: 22px; margin: 0 6px; flex: none; background: #cfcfcd; }
.flat { background: #fff; }
.search { width: 161px; height: 26px; padding-left: 7px; font-size: 13px; }
.search + .tool { width: 29px; }
.pageno { display: flex; align-items: flex-start; gap: 3px; margin: 0 0 8px 2px; }
.num { width: 35px; height: 26px; padding-left: 7px; color: #000; }
.of { line-height: 24px; }
.combo { appearance: none; height: 30px; padding-left: 8px; border: 1px solid #b0b0ae; border-bottom-color: #8e8e8c; border-radius: 3px;
  background-image: linear-gradient(45deg, transparent 50%, #2e3436 50%), linear-gradient(-45deg, transparent 50%, #2e3436 50%), linear-gradient(#eaeae8, #d0d0ce);
  background-size: 5px 5px, 5px 5px, auto; background-position: right 16px center, right 11px center, 0 0; background-repeat: no-repeat; }
.status { width: 127px; margin: 0 0 0 3px; }

.main { flex: 1; min-height: 0; display: flex; }
.sidebar { width: 557px; flex: none; margin: 0 0 4px 6px; display: flex; flex-direction: column; border: 1px solid #9b9e9d; border-radius: 3px 3px 0 0; }
.tabs { display: flex; height: 27px; flex: none; font-size: 16px; }
.tab { padding: 0 3px; border-right: 1px solid #9b9e9d; border-bottom: 1px solid #9b9e9d; white-space: nowrap; }
.tab.active { border-bottom-color: transparent; font-weight: 700; color: #000; }
.tabs > .tab:first-child { border-top-right-radius: 3px; }
.tabfill { flex: 1; border-bottom: 1px solid #9b9e9d; }
.tabs.small { height: 25px; font-size: 14px; }
.tabs.small .tab { padding: 0 2px; }

.server { display: grid; grid-template-columns: 1fr 1fr; gap: 7px; padding: 6px 6px 0 5px; align-items: center; }
.btn { height: 34px; display: flex; align-items: center; justify-content: center; gap: 4px; border: 1px solid #b4b4b2; border-bottom-color: #8e8e8c; border-radius: 3px; background: linear-gradient(#eaeae8, #d0d0ce); box-shadow: inset 0 1px #f4f4f3; white-space: nowrap; }
.btn.wide { grid-column: 1 / -1; font-weight: 600; }
.recent { width: 100%; color: #000; }
.collections { display: flex; align-items: center; gap: 6px; padding: 6px 5px 0 4px; }
.coll-label { width: 78px; font-weight: 600; }
.coll { flex: 1; }
.colid { width: 56px; height: 29px; padding-left: 7px; }
.docs { flex: 1; min-height: 0; margin: 6px 4px 6px; display: flex; flex-direction: column; border: 1px solid #9b9e9d; border-radius: 3px 3px 0 0; }
.docframe { flex: 1; min-height: 0; margin: 4px 5px 5px; padding: 0 5px; display: flex; flex-direction: column; border: 1px solid #b4b6b4; }
.pager { height: 46px; flex: none; display: flex; align-items: center; padding-left: 7px; }
.pager .tool { width: 28px; }
.pager .sep { height: 18px; margin: 0 6px 0 5px; }
.pager .pageno { margin: 0 1px 6px 0; }
.range { width: 65px; padding-bottom: 5px; white-space: nowrap; }
.docid { width: 46px; height: 26px; padding-left: 4px; font-size: 13px; }
.tablebox { flex: 1; min-height: 0; display: flex; flex-direction: column; justify-content: space-between; overflow: hidden; border: 1px solid #b4b6b4; background: #fff; color: #000; }
.table { width: 100%; table-layout: fixed; border-collapse: separate; border-spacing: 0; }
.c-id { width: 50px; }
.c-title { width: 257px; }
.c-pages { width: 50px; }
.c-up { width: 100px; }
.table th, .table td { height: 26px; padding: 0 0 0 7px; text-align: left; overflow: hidden; white-space: nowrap; }
.table th { color: #8f9292; font-weight: 600; border-right: 1px solid #dedede; border-bottom: 1px solid #dedede; }
.table th:last-child { border-right: 0; }
.table .selected td { background: #4a90d9; color: #fff; font-weight: 600; }
.hscroll { height: 14px; flex: none; padding: 3px; border-top: 1px solid #b4b6b4; background: #c3c4c3; }
.hthumb { width: 78%; height: 6px; border-radius: 3px; background: #7a7f7f; }
.filterbar { height: 62px; flex: none; display: flex; align-items: center; gap: 12px; padding: 0 11px 2px 5px; }
.count { width: 67px; }
.filter { flex: 1; height: 35px; padding: 0 0 2px 9px; border: 1px solid #b4b6b4; border-radius: 3px; background: #fff; }
.reload { width: 30px; height: 30px; }

.work { flex: 1; min-width: 0; display: flex; flex-direction: column; padding-left: 3px; }
.upper { flex: 1043 1 0; min-height: 0; display: flex; margin: 0 10px 3px 0; }
.sidetools { width: 62px; flex: none; display: flex; flex-direction: column; padding: 4px 0 0 10px; font-size: 15px; }
.side { height: 32px; display: flex; align-items: center; }
.side span { width: 24px; text-align: center; }
.canvas { flex: 1; min-width: 0; border: 1px solid #b4b6b4; background: #fff; overflow: hidden; }
.page { display: block; width: 100%; height: 100%; }
.scan { fill: #05050a; stroke: #05050a; stroke-width: 3; stroke-linejoin: round; font: 102px "Liberation Serif", serif; }
.fig { font: 72px "DejaVu Serif", serif; }
.region { stroke: #a9f5a9; stroke-width: 5; }
.band { fill: rgba(30, 30, 130, .09); }
.baseline { fill: none; stroke: rgba(40, 40, 140, .42); stroke-width: 5; }
.line { fill: none; stroke: rgba(80, 206, 220, .5); stroke-width: 5; }
.bounds { fill: none; stroke: rgba(0, 128, 120, .42); stroke-width: 5; stroke-dasharray: 18 5 6 5; }
.shape { fill: rgba(80, 206, 220, .27); stroke: rgba(80, 206, 220, .55); stroke-width: 6; }
.knots { fill: rgba(50, 200, 215, .5); }

.transcript { flex: 478 1 0; min-height: 0; display: flex; margin-right: 6px; border: 1px solid #b4b6b4; background: #fff; }
.lines { flex: 1; min-height: 0; overflow: hidden; padding: 1px 0 0 17px; color: #000; font: 18px/27px "Liberation Sans", Arial, sans-serif; }
.tl { margin: 0; height: 27px; display: flex; align-items: center; gap: 8px; }
.no { width: 36px; line-height: 20px; background: #bfbfbf; white-space: nowrap; }
.now { color: #0000ee; }
.now .no { color: #000; font-weight: 700; }
.vscroll { width: 12px; padding: 3px; display: flex; flex-direction: column; border-left: 1px solid #b4b6b4; background: #c3c4c3; }
.vspace { height: 76%; }
.vthumb { width: 6px; height: 12%; border-radius: 3px; background: #7a7f7f; }
.texttools { height: 50px; flex: none; display: flex; align-items: center; padding-left: 2px; }
.glyph { font: 16px/20px "Liberation Serif", serif; color: #444; }
.glyph sub, .glyph sup { font-size: 10px; line-height: 0; color: #5c8fd6; }
```
